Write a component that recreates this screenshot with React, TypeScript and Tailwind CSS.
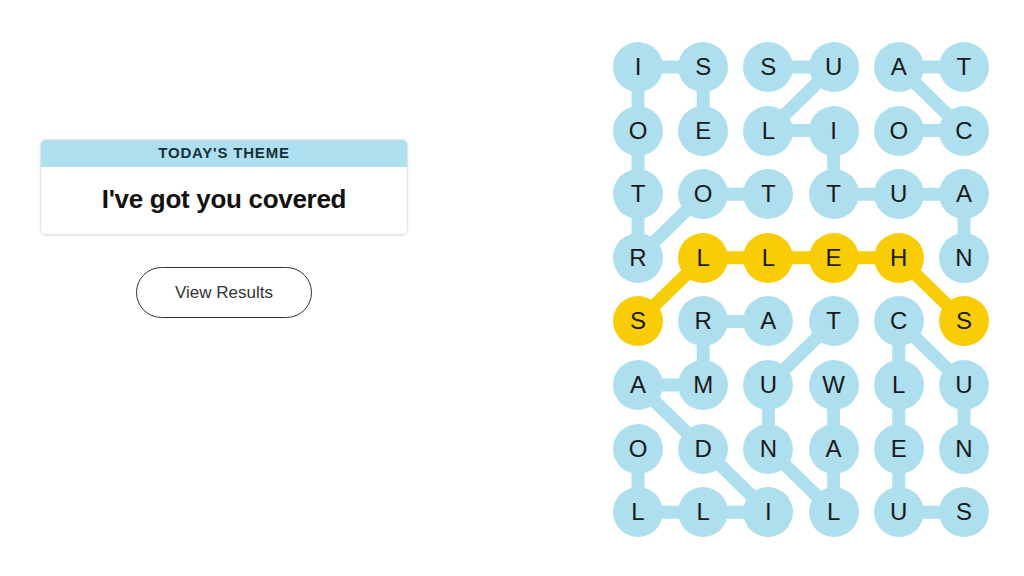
import React from 'react';

const letters = [
  'ISSUAT',
  'OELIOC',
  'TOTTUA',
  'RLLEHN',
  'SRATCS',
  'AMUWLU',
  'ODNAEN',
  'LLILUS',
];

// each word is a path of [row, col] cells
const words: { path: [number, number][]; yellow?: boolean }[] = [
  { path: [[2, 2], [2, 1], [3, 0], [2, 0], [1, 0], [0, 0], [0, 1], [1, 1]] },
  { path: [[3, 5], [2, 5], [2, 4], [2, 3], [1, 3], [1, 2], [0, 3], [0, 2]] },
  { path: [[0, 5], [0, 4], [1, 5], [1, 4]] },
  { path: [[4, 0], [3, 1], [3, 2], [3, 3], [3, 4], [4, 5]], yellow: true },
  { path: [[4, 2], [4, 1], [5, 1], [5, 0], [6, 1], [7, 2], [7, 1], [7, 0], [6, 0]] },
  { path: [[5, 3], [6, 3], [7, 3], [6, 2], [5, 2], [4, 3]] },
  { path: [[6, 5], [5, 5], [4, 4], [5, 4], [6, 4], [7, 4], [7, 5]] },
];

const BLUE = '#aedfee';
const YELLOW = '#f8cd05';
const CELL = 50;
const COL_STEP = 65.2;
const ROW_STEP = 63.6;

const cx = (c: number) => CELL / 2 + c * COL_STEP;
const cy = (r: number) => CELL / 2 + r * ROW_STEP;

const isYellow = (r: number, c: number) =>
  words.some((w) => w.yellow && w.path.some(([pr, pc]) => pr === r && pc === c));

const Board: React.FC = () => {
  return (
    <div className="relative">
      <svg className="absolute inset-0" width={CELL + 5 * COL_STEP} height={CELL + 7 * ROW_STEP}>
        {words.map((w, i) =>
          w.path.slice(1).map(([r, c], j) => {
            const [pr, pc] = w.path[j];
            return (
              <line
                key={`${i}-${j}`}
                x1={cx(pc)}
                y1={cy(pr)}
                x2={cx(c)}
                y2={cy(r)}
                stroke={w.yellow ? YELLOW : BLUE}
                strokeWidth={13}
              />
            );
          })
        )}
      </svg>
      <div className="relative grid grid-cols-[repeat(6,50px)] gap-x-[15.2px] gap-y-[13.6px]">
        {letters.map((row, r) =>
          row.split('').map((ch, c) => (
            <div
              key={`${r}-${c}`}
              className={`w-[50px] h-[50px] rounded-full flex items-center justify-center text-[24px] text-[#1a1a1a] ${
                isYellow(r, c) ? 'bg-[#f8cd05]' : 'bg-[#aedfee]'
              }`}
            >
              {ch}
            </div>
          ))
        )}
      </div>
    </div>
  );
};

export default function App() {
  return (
    <div
      className="w-[1024px] h-[576px] bg-white flex overflow-hidden"
      style={{ fontFamily: '"Liberation Sans", Arial, sans-serif' }}
    >
      <div className="ml-[40px] w-[368px] pt-[139px] flex flex-col">
        <div className="h-[96px] rounded-md border border-[#e4e4e4] shadow-[0_1px_2px_rgba(0,0,0,0.08)] overflow-hidden flex flex-col">
          <div className="h-[27px] bg-[#aedfee] flex items-center justify-center text-[15px] font-bold tracking-[0.8px] text-[#17303a]">
            TODAY&apos;S THEME
          </div>
          <div className="flex-1 flex items-center justify-center pb-[2px] text-[26px] font-bold text-[#121212] tracking-[-0.3px]">
            I&apos;ve got you covered
          </div>
        </div>
        <button className="self-center mt-[32px] w-[176px] h-[51px] rounded-full border border-[#333] text-[17px] text-[#333] bg-white">
          View Results
        </button>
      </div>
      <div className="ml-[205px] pt-[42px]">
        <Board />
      </div>
    </div>
  );
}
